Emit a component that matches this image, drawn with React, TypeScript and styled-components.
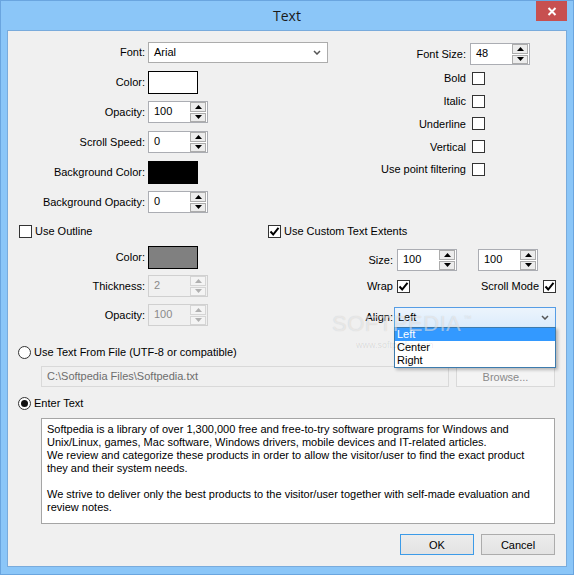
import React from 'react';
import styled, { createGlobalStyle } from 'styled-components';

const GlobalStyle = createGlobalStyle`
  html, body { margin: 0; padding: 0; background: #8bc6f8; }
  body {
    font-family: "Liberation Sans", Arial, sans-serif;
    font-size: 11px;
    color: #000;
  }
  * { box-sizing: border-box; }
`;

const Window = styled.div`
  width: 574px;
  height: 575px;
  border: 1px solid #6aa5df;
  background: #8bc6f8;
  padding: 0 6px 7px;
  display: flex;
  flex-direction: column;
`;

const TitleBar = styled.div`
  height: 29px;
  display: grid;
  grid-template-columns: 1fr auto 1fr;
  align-items: center;
`;

const Title = styled.div`
  font-family: "Open Sans", "Noto Sans", sans-serif;
  font-size: 14px;
  color: #1a1a1a;
  line-height: 1;
  padding-top: 1px;
`;

const CloseButton = styled.div`
  justify-self: end;
  align-self: start;
  width: 31px;
  height: 20px;
  background: #c75050;
  display: flex;
  align-items: center;
  justify-content: center;
`;

const Panel = styled.div`
  flex: 1;
  position: relative;
  background: #f0f0f0;
  border: 1px solid #79abdc;
  display: flex;
  flex-direction: column;
`;

const TopSection = styled.div`
  display: flex;
  justify-content: space-between;
  padding: 10px 36px 0 0;
`;

const FieldGrid = styled.div<{ $labelWidth: number; $rowGap: number; $top?: number }>`
  display: grid;
  grid-template-columns: ${p => p.$labelWidth}px auto;
  grid-auto-rows: 22px;
  column-gap: 3px;
  row-gap: ${p => p.$rowGap}px;
  align-items: center;
  margin-top: ${p => p.$top || 0}px;
`;

const OptionGrid = styled.div`
  display: grid;
  grid-template-columns: auto 60px;
  grid-template-rows: 26px repeat(5, 22.75px);
  column-gap: 4px;
  align-items: center;
`;

const Label = styled.div`
  text-align: right;
  white-space: nowrap;
`;

const Combo = styled.div<{ $width: number; $focused?: boolean }>`
  position: relative;
  width: ${p => p.$width}px;
  height: 21px;
  display: flex;
  align-items: center;
  justify-content: space-between;
  padding: 0 6px 0 ${p => (p.$focused ? 3 : 5)}px;
  border: 1px solid ${p => (p.$focused ? '#569de5' : '#acacac')};
  background: ${p => (p.$focused ? 'linear-gradient(#ecf4fc, #dcecfc)' : '#fff')};
  margin-left: ${p => (p.$focused ? -3 : 0)}px;
`;

const DropList = styled.div`
  position: absolute;
  left: -1px;
  top: 100%;
  width: 162px;
  border: 1px solid #3d7bad;
  background: #fff;
  box-shadow: 2px 2px 3px rgba(0, 0, 0, 0.25);
  z-index: 3;
`;

const DropItem = styled.div<{ $active?: boolean }>`
  height: 13px;
  line-height: 13px;
  padding-left: 2px;
  background: ${p => (p.$active ? '#3399ff' : 'transparent')};
  color: ${p => (p.$active ? '#fff' : '#000')};
`;

const SpinFrame = styled.div<{ $disabled?: boolean }>`
  width: 60px;
  height: 22px;
  display: flex;
  border: 1px solid ${p => (p.$disabled ? '#d0d0d0' : '#abadb3')};
  background: ${p => (p.$disabled ? '#f0f0f0' : '#fff')};
`;

const SpinValue = styled.div<{ $disabled?: boolean }>`
  flex: 1;
  padding-left: 5px;
  line-height: 19px;
  color: ${p => (p.$disabled ? '#8a8a8a' : '#000')};
`;

const SpinButtons = styled.div`
  width: 17px;
  display: flex;
  flex-direction: column;
  gap: 1px;
  padding: 0 1px 0 0;
`;

const SpinButton = styled.div<{ $disabled?: boolean }>`
  flex: 1;
  display: flex;
  align-items: center;
  justify-content: center;
  border: 1px solid ${p => (p.$disabled ? '#d5d5d5' : '#acacac')};
  background: ${p => (p.$disabled ? '#f4f4f4' : '#ececec')};
`;

const Swatch = styled.div<{ $color: string }>`
  width: 50px;
  height: 23px;
  border: 1px solid #000;
  background: ${p => p.$color};
`;

const Box = styled.div<{ $offset?: number }>`
  width: 13px;
  height: 13px;
  border: 1px solid #333;
  background: #fff;
  display: flex;
  align-items: center;
  justify-content: center;
  margin-left: ${p => p.$offset || 0}px;
  flex: none;
`;

const RadioCircle = styled.div`
  width: 13px;
  height: 13px;
  border: 1px solid #333;
  border-radius: 50%;
  background: #fff;
  display: flex;
  align-items: center;
  justify-content: center;
  flex: none;
`;

const RadioDot = styled.div`
  width: 7px;
  height: 7px;
  border-radius: 50%;
  background: #111;
`;

const CheckLine = styled.div<{ $gap?: number; $top?: number }>`
  height: 14px;
  display: flex;
  align-items: center;
  gap: ${p => p.$gap ?? 3}px;
  margin-top: ${p => p.$top || 0}px;
  white-space: nowrap;
`;

const MiddleSection = styled.div`
  display: flex;
  padding-left: 11px;
  margin-top: 11px;
`;

const Column = styled.div<{ $width?: number }>`
  width: ${p => (p.$width ? `${p.$width}px` : 'auto')};
  display: flex;
  flex-direction: column;
`;

const ExtentsGrid = styled.div`
  display: grid;
  grid-template-columns: 125px 159px;
  grid-template-rows: 26px 31px 22px;
  column-gap: 4px;
  align-items: start;
  margin-top: 11px;
`;

const Cell = styled.div<{ $justify?: string }>`
  height: 22px;
  display: flex;
  align-items: center;
  justify-content: ${p => p.$justify || 'flex-start'};
  gap: 4px;
`;

const LabelCell = styled(Cell)`
  justify-content: flex-end;
  white-space: nowrap;
`;

const SizePair = styled(Cell)`
  gap: 21px;
`;

const LowerSection = styled.div`
  display: flex;
  flex-direction: column;
  padding-left: 10px;
`;

const Indented = styled.div<{ $top: number }>`
  margin: ${p => p.$top}px 0 0 23px;
  display: flex;
  gap: 7px;
`;

const PathField = styled.div`
  width: 408px;
  height: 21px;
  border: 1px solid #d9d9d9;
  background: #f0f0f0;
  color: #6d6d6d;
  line-height: 19px;
  padding-left: 5px;
`;

const PushButton = styled.div<{ $width: number; $default?: boolean; $disabled?: boolean }>`
  width: ${p => p.$width}px;
  height: 21px;
  display: flex;
  align-items: center;
  justify-content: center;
  border: 1px solid ${p => (p.$default ? '#3c9be8' : p.$disabled ? '#d9d9d9' : '#acacac')};
  background: ${p => (p.$disabled ? '#f4f4f4' : 'linear-gradient(#ececec, #e3e3e3)')};
  color: ${p => (p.$disabled ? '#8a8a8a' : '#000')};
`;

const TextBox = styled.div`
  width: 514px;
  height: 106px;
  background: #fff;
  border: 1px solid #a5a5a5;
  padding: 4px 5px;
  line-height: 13px;
  white-space: pre;
  overflow: hidden;
`;

const ButtonBar = styled.div`
  display: flex;
  justify-content: flex-end;
  gap: 7px;
  margin-top: 10px;
  padding-right: 11px;
`;

const Watermark = styled.div`
  position: absolute;
  left: 324px;
  top: 276px;
  pointer-events: none;
  z-index: 4;
  display: flex;
  flex-direction: column;
  align-items: flex-start;
`;

const WatermarkLogo = styled.div`
  font-size: 22px;
  letter-spacing: 0.5px;
  color: rgba(255, 255, 255, 0.5);
  text-shadow: 0 0 1px rgba(0, 0, 0, 0.16);
  line-height: 24px;
`;

const TradeMark = styled.sup`
  font-size: 8px;
  vertical-align: 10px;
  margin-left: 2px;
`;

const WatermarkUrl = styled.div`
  font-size: 9px;
  color: rgba(0, 0, 0, 0.1);
  margin: 4px 0 0 24px;
`;

const Chevron = () => (
  <svg width="8" height="5" viewBox="0 0 8 5">
    <path d="M1 1 L4 4 L7 1" fill="none" stroke="#555" strokeWidth="1.5" />
  </svg>
);

const Arrow = ({ up, disabled }: { up?: boolean; disabled?: boolean }) => (
  <svg width="7" height="4" viewBox="0 0 7 4">
    <path d={up ? 'M0 4 L3.5 0 L7 4Z' : 'M0 0 L3.5 4 L7 0Z'} fill={disabled ? '#b0b0b0' : '#000'} />
  </svg>
);

const Spin = ({ value, disabled }: { value: string; disabled?: boolean }) => (
  <SpinFrame $disabled={disabled}>
    <SpinValue $disabled={disabled}>{value}</SpinValue>
    <SpinButtons>
      <SpinButton $disabled={disabled}><Arrow up disabled={disabled} /></SpinButton>
      <SpinButton $disabled={disabled}><Arrow disabled={disabled} /></SpinButton>
    </SpinButtons>
  </SpinFrame>
);

const CheckBox = ({ checked, offset }: { checked?: boolean; offset?: number }) => (
  <Box $offset={offset}>
    {checked && (
      <svg width="11" height="11" viewBox="0 0 11 11">
        <path d="M1.5 5.5 L4.2 8.5 L9.5 1.8" fill="none" stroke="#000" strokeWidth="2" />
      </svg>
    )}
  </Box>
);

const Radio = ({ checked }: { checked?: boolean }) => (
  <RadioCircle>{checked && <RadioDot />}</RadioCircle>
);

const sampleText = [
  'Softpedia is a library of over 1,300,000 free and free-to-try software programs for Windows and',
  'Unix/Linux, games, Mac software, Windows drivers, mobile devices and IT-related articles.',
  'We review and categorize these products in order to allow the visitor/user to find the exact product',
  'they and their system needs.',
  '',
  'We strive to deliver only the best products to the visitor/user together with self-made evaluation and',
  'review notes.',
].join('\n');

const options = ['Bold', 'Italic', 'Underline', 'Vertical', 'Use point filtering'];

export default function App() {
  return (
    <>
      <GlobalStyle />
      <Window>
        <TitleBar>
          <span />
          <Title>Text</Title>
          <CloseButton>
            <svg width="10" height="9" viewBox="0 0 10 9">
              <path d="M1.5 1 L8.5 8 M8.5 1 L1.5 8" stroke="#fff" strokeWidth="2" />
            </svg>
          </CloseButton>
        </TitleBar>
        <Panel>
          <TopSection>
            <FieldGrid $labelWidth={137} $rowGap={8}>
              <Label>Font:</Label>
              <Combo $width={180}>
                <span>Arial</span>
                <Chevron />
              </Combo>
              <Label>Color:</Label>
              <Swatch $color="#fff" />
              <Label>Opacity:</Label>
              <Spin value="100" />
              <Label>Scroll Speed:</Label>
              <Spin value="0" />
              <Label>Background Color:</Label>
              <Swatch $color="#000" />
              <Label>Background Opacity:</Label>
              <Spin value="0" />
            </FieldGrid>
            <OptionGrid>
              <Label>Font Size:</Label>
              <Spin value="48" />
              {options.map(o => (
                <React.Fragment key={o}>
                  <Label>{o}</Label>
                  <CheckBox offset={2} />
                </React.Fragment>
              ))}
            </OptionGrid>
          </TopSection>

          <MiddleSection>
            <Column $width={249}>
              <CheckLine>
                <CheckBox />
                <span>Use Outline</span>
              </CheckLine>
              <FieldGrid $labelWidth={126} $rowGap={7} $top={8}>
                <Label>Color:</Label>
                <Swatch $color="#808080" />
                <Label>Thickness:</Label>
                <Spin value="2" disabled />
                <Label>Opacity:</Label>
                <Spin value="100" disabled />
              </FieldGrid>
            </Column>
            <Column>
              <CheckLine>
                <CheckBox checked />
                <span>Use Custom Text Extents</span>
              </CheckLine>
              <ExtentsGrid>
                <LabelCell>Size:</LabelCell>
                <SizePair>
                  <Spin value="100" />
                  <Spin value="100" />
                </SizePair>
                <LabelCell>Wrap</LabelCell>
                <Cell $justify="space-between">
                  <CheckBox checked />
                  <CheckLine $gap={4}>
                    <span>Scroll Mode</span>
                    <CheckBox checked />
                  </CheckLine>
                </Cell>
                <LabelCell>Align:</LabelCell>
                <Cell>
                  <Combo $width={162} $focused>
                    <span>Left</span>
                    <Chevron />
                    <DropList>
                      <DropItem $active>Left</DropItem>
                      <DropItem>Center</DropItem>
                      <DropItem>Right</DropItem>
                    </DropList>
                  </Combo>
                </Cell>
              </ExtentsGrid>
            </Column>
          </MiddleSection>

          <LowerSection>
            <CheckLine $top={17}>
              <Radio />
              <span>Use Text From File (UTF-8 or compatible)</span>
            </CheckLine>
            <Indented $top={7}>
              <PathField>C:\Softpedia Files\Softpedia.txt</PathField>
              <PushButton $width={99} $disabled>Browse...</PushButton>
            </Indented>
            <CheckLine $top={9}>
              <Radio checked />
              <span>Enter Text</span>
            </CheckLine>
            <Indented $top={8}>
              <TextBox>{sampleText}</TextBox>
            </Indented>
            <ButtonBar>
              <PushButton $width={74} $default>OK</PushButton>
              <PushButton $width={74}>Cancel</PushButton>
            </ButtonBar>
          </LowerSection>

          <Watermark>
            <WatermarkLogo>
              SOFTPEDIA<TradeMark>™</TradeMark>
            </WatermarkLogo>
            <WatermarkUrl>www.softpedia.com</WatermarkUrl>
          </Watermark>
        </Panel>
      </Window>
    </>
  );
}
